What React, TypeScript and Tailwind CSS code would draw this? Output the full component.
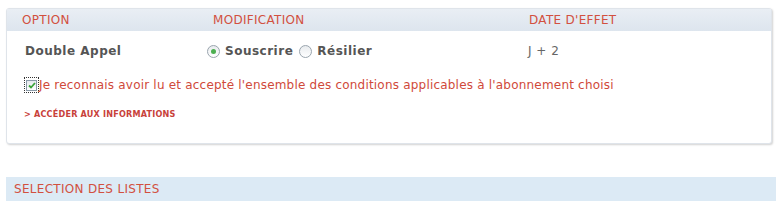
import React from "react";

export default function App() {
  return (
    <div className="w-[776px] h-[201px] bg-white overflow-hidden pt-[8px] pl-[6px] pr-[4px]" style={{ fontFamily: '"DejaVu Sans", Verdana, sans-serif' }}>
      <div className="h-[136px] border border-[#dfe4ea] rounded-[3px] shadow-[1px_1px_2px_rgba(0,0,0,0.18)] bg-white flex flex-col">
        <div className="h-[22px] bg-gradient-to-b from-[#e9eef4] to-[#dde5ee] flex items-center text-[12px] text-[#d2503f] tracking-[0.3px]">
          <div className="w-[206px] pl-[15px]">OPTION</div>
          <div className="w-[316px]">MODIFICATION</div>
          <div>DATE D'EFFET</div>
        </div>
        <div className="flex items-center h-[40px] text-[12px] text-[#555] font-bold tracking-[0.5px]">
          <div className="w-[200px] pl-[18px]">Double Appel</div>
          <div className="w-[321px] flex items-center">
            <span className="w-[13px] h-[13px] rounded-full border border-[#9aa5ae] bg-gradient-to-b from-[#e8ebee] to-white flex items-center justify-center mr-[5px]">
              <span className="w-[5px] h-[5px] rounded-full bg-[#4caf50]" />
            </span>
            <span>Souscrire</span>
            <span className="w-[13px] h-[13px] rounded-full border border-[#9aa5ae] bg-gradient-to-b from-[#e8ebee] to-white ml-[6px] mr-[5px]" />
            <span>Résilier</span>
          </div>
          <div className="font-normal text-[#666]">J + 2</div>
        </div>
        <div className="flex items-center pl-[17px] mt-[6px] h-[16px]">
          <span className="w-[15px] h-[16px] border border-dotted border-[#333] flex items-center justify-center">
            <span className="w-[11px] h-[11px] border border-[#8a9aa8] bg-gradient-to-b from-[#e6eaee] to-white flex items-center justify-center">
              <svg width="8" height="7" viewBox="0 0 8 7"><path d="M1 3.5 L3 5.5 L7 1" fill="none" stroke="#3aa43a" strokeWidth="1.8" /></svg>
            </span>
          </span>
          <span className="text-[12px] text-[#d0493a] tracking-[0.2px]">Je reconnais avoir lu et accepté l'ensemble des conditions applicables à l'abonnement choisi</span>
        </div>
        <div className="pl-[17px] mt-[15px] text-[9px] font-bold text-[#c8413a] tracking-[0.2px]" style={{ fontFamily: '"DejaVu Sans Condensed", "DejaVu Sans", sans-serif' }}>
          &gt; ACCÉDER AUX INFORMATIONS
        </div>
      </div>
      <div className="mt-[33px] h-[24px] bg-[#dceaf5] flex items-center pl-[8px] text-[12px] text-[#d2503f] tracking-[0.3px] -mr-[4px]">
        SELECTION DES LISTES
      </div>
    </div>
  );
}
